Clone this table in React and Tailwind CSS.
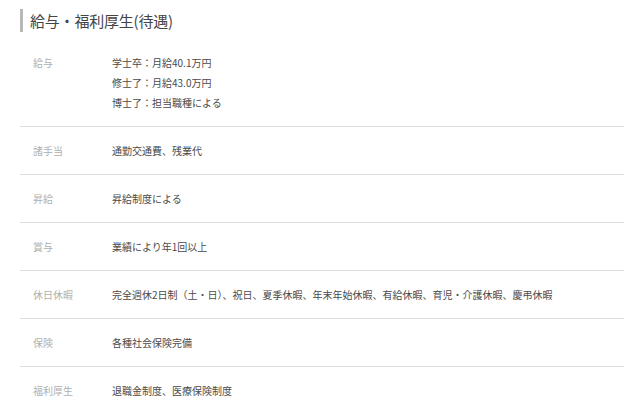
const ROWS = [
  { label: '給与', lines: ['学士卒：月給40.1万円', '修士了：月給43.0万円', '博士了：担当職種による'] },
  { label: '諸手当', lines: ['通勤交通費、残業代'] },
  { label: '昇給', lines: ['昇給制度による'] },
  { label: '賞与', lines: ['業績により年1回以上'] },
  { label: '休日休暇', lines: ['完全週休2日制（土・日）、祝日、夏季休暇、年末年始休暇、有給休暇、育児・介護休暇、慶弔休暇'] },
  { label: '保険', lines: ['各種社会保険完備'] },
  { label: '福利厚生', lines: ['退職金制度、医療保険制度'] },
]

export default function App() {
  return (
    <div className="w-[640px] h-[402px] overflow-hidden bg-white pl-[20px] pr-[16px] pt-[9px]"
      style={{ fontFamily: '"Noto Sans CJK JP", "Noto Sans", sans-serif' }}>
      <div className="flex items-center h-[23px]">
        <div className="w-[3px] h-full bg-[#b8b8b8]" />
        <h2 className="ml-[7px] text-[15px] leading-[23px] text-[#444] tracking-[-0.2px]">給与・福利厚生(待遇)</h2>
      </div>

      <div>
        {ROWS.map((r, i) => (
          <div key={r.label}
            className={`flex border-b border-[#dedede] ${i === 0 ? 'pt-[21px] pb-[13px]' : 'pt-[14px] pb-[13px]'}`}>
            <div className="w-[92px] pl-[13px] text-[10px] leading-[20px] text-[#b0b0b0] shrink-0">{r.label}</div>
            <div className="text-[10px] leading-[20px] text-[#4a4a4a]">
              {r.lines.map(l => <div key={l}>{l}</div>)}
            </div>
          </div>
        ))}
      </div>
    </div>
  )
}
